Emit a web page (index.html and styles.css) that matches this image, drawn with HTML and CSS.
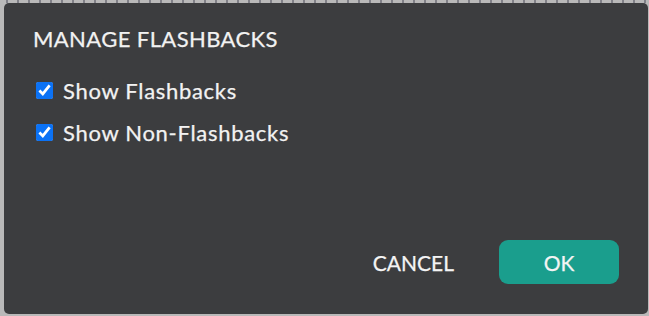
FILE: index.html
```html
<!DOCTYPE html>
<html>
<head>
<meta charset="utf-8">
<link rel="stylesheet" href="styles.css">
</head>
<body>
<div class="backdrop">
  <div class="strip-top"></div>
</div>
<div class="dialog">
  <h2 class="title">MANAGE FLASHBACKS</h2>
  <label class="option"><input type="checkbox" checked><span>Show Flashbacks</span></label>
  <label class="option"><input type="checkbox" checked><span>Show Non-Flashbacks</span></label>
  <div class="spacer"></div>
  <div class="actions">
    <button class="btn cancel">CANCEL</button>
    <button class="btn ok">OK</button>
  </div>
</div>
</body>
</html>
```
FILE: styles.css
```css
html, body {
  margin: 0;
  padding: 0;
  width: 649px;
  height: 316px;
  overflow: hidden;
  background: #b8b8b8;
}
.backdrop {
  position: absolute;
  inset: 0;
  background: #b9b9b9;
}
.strip-top {
  height: 3px;
  background: repeating-linear-gradient(90deg, #b9b9b9 0 6px, #5a5a66 6px 8px, #b9b9b9 8px 11px);
  opacity: 0.6;
}
.dialog {
  position: absolute;
  left: 4px;
  top: 3px;
  width: 644px;
  height: 311px;
  box-sizing: border-box;
  background: #3c3d3f;
  border-radius: 5px;
  padding: 22px 29px 30px 29px;
  display: flex;
  flex-direction: column;
  font-family: Lato, "Open Sans", sans-serif;
  color: #f2f2f2;
}
.title {
  margin: 0 0 25px 0;
  font-size: 22px;
  font-weight: 400;
  letter-spacing: 0.4px;
  line-height: 28px;
  -webkit-text-stroke: 0.25px #f2f2f2;
}
.option {
  display: flex;
  align-items: center;
  gap: 10px;
  height: 24px;
  margin-bottom: 18px;
  font-size: 22px;
  letter-spacing: 0.7px;
  -webkit-text-stroke: 0.25px #f2f2f2;
}
.option input {
  width: 17px;
  height: 17px;
  margin: 0 0 0 3px;
  accent-color: #0b72f5;
}
.spacer {
  flex: 1;
}
.actions {
  display: flex;
  justify-content: flex-end;
  align-items: center;
  gap: 27px;
}
.btn {
  font-family: Lato, "Open Sans", sans-serif;
  font-size: 21px;
  border: none;
  color: #f4f4f4;
  background: transparent;
  cursor: pointer;
  -webkit-text-stroke: 0.25px #f4f4f4;
}
.cancel {
  padding: 0 18px;
  height: 44px;
}
.ok {
  width: 120px;
  height: 44px;
  border-radius: 9px;
  background: #1a9e8d;
}
```
